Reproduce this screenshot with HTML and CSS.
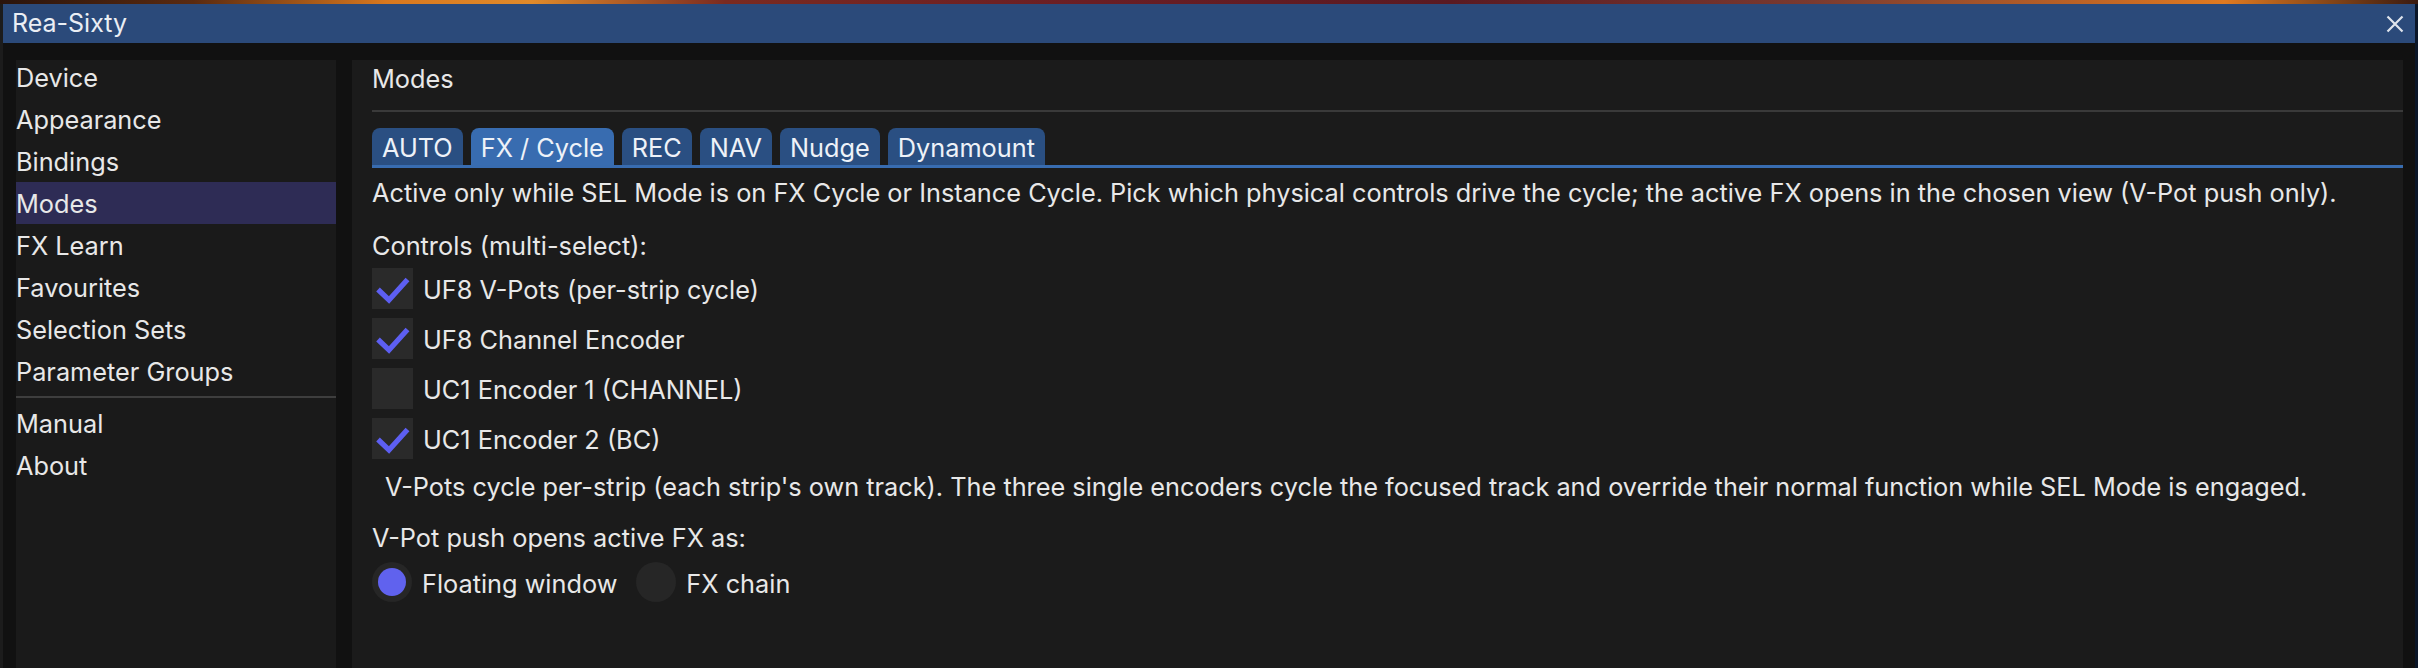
FILE: index.html
```html
<!DOCTYPE html>
<html>
<head>
<meta charset="utf-8">
<link rel="stylesheet" href="styles.css">
</head>
<body>
<div class="desktop-strip"></div>
<div class="window">
  <div class="titlebar">
    <span class="title">Rea-Sixty</span>
    <svg class="close" width="18" height="18" viewBox="0 0 18 18"><path d="M1.5 1.5 L16.5 16.5 M16.5 1.5 L1.5 16.5" stroke="#dfe4ec" stroke-width="2.2" fill="none"/></svg>
  </div>
  <div class="body">
    <nav class="sidebar">
      <ul class="nav-list">
        <li class="nav-item">Device</li>
        <li class="nav-item">Appearance</li>
        <li class="nav-item">Bindings</li>
        <li class="nav-item selected">Modes</li>
        <li class="nav-item">FX Learn</li>
        <li class="nav-item">Favourites</li>
        <li class="nav-item">Selection Sets</li>
        <li class="nav-item">Parameter Groups</li>
        <li class="nav-sep"></li>
        <li class="nav-item">Manual</li>
        <li class="nav-item">About</li>
      </ul>
    </nav>
    <main class="content">
      <div class="heading">Modes</div>
      <div class="hr"></div>
      <div class="tabbar">
        <div class="tab">AUTO</div>
        <div class="tab active">FX / Cycle</div>
        <div class="tab">REC</div>
        <div class="tab">NAV</div>
        <div class="tab">Nudge</div>
        <div class="tab">Dynamount</div>
      </div>
      <p class="text desc">Active only while SEL Mode is on FX Cycle or Instance Cycle. Pick which physical controls drive the cycle; the active FX opens in the chosen view (V-Pot push only).</p>
      <p class="text label-controls">Controls (multi-select):</p>
      <div class="checks">
        <label class="check-row"><span class="box"><svg width="41" height="41" viewBox="0 0 41 41"><path d="M6 21.5 L17 32 L35.5 11.5" stroke="#5d5ff2" stroke-width="5.2" fill="none" stroke-linejoin="miter"/></svg></span><span class="check-label">UF8 V-Pots (per-strip cycle)</span></label>
        <label class="check-row"><span class="box"><svg width="41" height="41" viewBox="0 0 41 41"><path d="M6 21.5 L17 32 L35.5 11.5" stroke="#5d5ff2" stroke-width="5.2" fill="none" stroke-linejoin="miter"/></svg></span><span class="check-label">UF8 Channel Encoder</span></label>
        <label class="check-row"><span class="box"></span><span class="check-label">UC1 Encoder 1 (CHANNEL)</span></label>
        <label class="check-row"><span class="box"><svg width="41" height="41" viewBox="0 0 41 41"><path d="M6 21.5 L17 32 L35.5 11.5" stroke="#5d5ff2" stroke-width="5.2" fill="none" stroke-linejoin="miter"/></svg></span><span class="check-label">UC1 Encoder 2 (BC)</span></label>
      </div>
      <p class="text hint">V-Pots cycle per-strip (each strip's own track). The three single encoders cycle the focused track and override their normal function while SEL Mode is engaged.</p>
      <p class="text label-push">V-Pot push opens active FX as:</p>
      <div class="radios">
        <label class="radio-row"><span class="radio on"><span class="dot"></span></span><span class="radio-label">Floating window</span></label>
        <label class="radio-row"><span class="radio"></span><span class="radio-label">FX chain</span></label>
      </div>
    </main>
  </div>
</div>
</body>
</html>
```

FILE: styles.css
```css
html, body {
  margin: 0;
  padding: 0;
}
body {
  width: 2418px;
  height: 668px;
  overflow: hidden;
  background: #0b1628;
  font-family: Inter, "Noto Sans", sans-serif;
  font-size: 25.3px;
  color: #e8e8e8;
}
.desktop-strip {
  height: 4px;
  background: linear-gradient(90deg, #2a140c 0%, #5a2a10 8%, #d9781e 16%, #e08a2a 22%, #7a2a20 30%, #6a1e24 45%, #5a1a22 60%, #7a3a30 75%, #c86a24 88%, #e07a20 92%, #3a1a10 100%);
}
.window {
  width: 2412px;
  height: 664px;
  border-left: 3px solid #1c1c1c;
  background: #111111;
  display: flex;
  flex-direction: column;
}
.titlebar {
  height: 39px;
  flex: none;
  background: #2b4a7a;
  display: flex;
  align-items: center;
  padding: 0 11px 0 9px;
  justify-content: space-between;
}
.title {
  font-size: 25px;
  color: #eaeef4;
  line-height: 39px;
}
.close {
  display: block;
  margin-top: 1px;
}
.body {
  flex: 1;
  display: flex;
  gap: 16px;
  padding: 17px 12px 0 13px;
  min-height: 0;
}
.sidebar {
  width: 320px;
  flex: none;
  background: #1a1a1a;
}
.nav-list {
  list-style: none;
  margin: -4px 0 0 0;
  padding: 0;
}
.nav-item {
  height: 42px;
  line-height: 43px;
  white-space: nowrap;
}
.nav-item.selected {
  background: #2e2c55;
}
.nav-sep {
  height: 2px;
  background: #3e3e3e;
  margin: 4px 0 4px 0;
}
.content {
  flex: 1;
  background: #1b1b1b;
  padding: 2px 0 0 20px;
  min-width: 0;
}
.heading {
  line-height: 34px;
}
.hr {
  height: 2px;
  background: #3a3a3a;
  margin-top: 14px;
}
.tabbar {
  margin-top: 16px;
  display: flex;
  gap: 8px;
  border-bottom: 3px solid #386cb0;
  height: 37px;
}
.tab {
  height: 37px;
  line-height: 39px;
  padding: 0 10px;
  background: #2a4f82;
  border-radius: 8px 8px 0 0;
  color: #eef2f8;
  white-space: nowrap;
}
.tab.active {
  background: #386cb0;
}
.text {
  margin: 0;
  line-height: 34px;
  white-space: nowrap;
}
.desc {
  margin-top: 8px;
}
.label-controls {
  margin-top: 19px;
}
.checks {
  margin-top: 5px;
  display: flex;
  flex-direction: column;
  gap: 9px;
}
.check-row {
  display: flex;
  align-items: center;
  gap: 10px;
  height: 41px;
}
.check-label {
  padding-top: 2px;
}
.box {
  width: 41px;
  height: 41px;
  background: #2a2a2a;
  display: block;
  flex: none;
}
.box svg {
  display: block;
}
.hint {
  margin-top: 11px;
  padding-left: 13px;
}
.label-push {
  margin-top: 17px;
}
.radios {
  margin-top: 7px;
  display: flex;
  align-items: center;
  gap: 19px;
}
.radio-row {
  display: flex;
  align-items: center;
  gap: 10px;
  height: 40px;
}
.radio-label {
  padding-top: 2px;
}
.radio {
  width: 40px;
  height: 40px;
  border-radius: 50%;
  background: #262626;
  display: flex;
  align-items: center;
  justify-content: center;
  flex: none;
}
.radio .dot {
  width: 28px;
  height: 28px;
  border-radius: 50%;
  background: #6062ee;
}
```
